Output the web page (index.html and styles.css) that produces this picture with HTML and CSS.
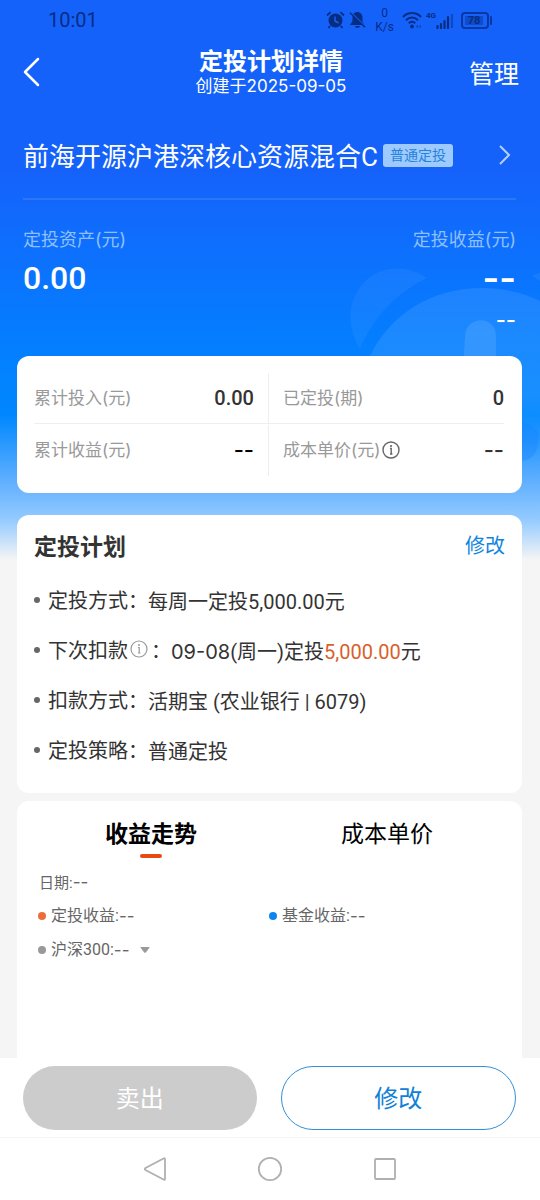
FILE: index.html
```html
<!DOCTYPE html>
<html lang="zh-CN">
<head>
<meta charset="utf-8">
<meta name="viewport" content="width=device-width, initial-scale=1">
<title>定投计划详情</title>
<link rel="stylesheet" href="styles.css">
</head>
<body>
<div class="app">
  <svg class="mascot" width="190" height="210" viewBox="350 260 190 210" aria-hidden="true">
    <defs>
      <linearGradient id="face" x1="0" y1="0" x2="0" y2="1">
        <stop offset="0" stop-color="#fff" stop-opacity=".09"/>
        <stop offset=".7" stop-color="#fff" stop-opacity=".09"/>
        <stop offset="1" stop-color="#fff" stop-opacity="0"/>
      </linearGradient>
    </defs>
    <path d="M427 278C409 266 385 265 369 278C346 297 346 327 360 349C373 317 396 293 427 278Z" fill="#fff" fill-opacity=".05"/>
    <path d="M532 276Q537 273 540 273V281Z" fill="#fff" fill-opacity=".06"/>
    <path d="M370 356C390 314 432 288 482 288C504 288 524 293 540 301V440H370Z" fill="url(#face)"/>
    <path d="M463 370L465 336C466 315 496 315 496 336V370Z" fill="#fff" fill-opacity=".11"/>
    <path d="M500 422Q528 418 538 432C540 450 534 462 518 461Z" fill="#1580ff" fill-opacity=".35"/>
  </svg>

  <div class="status">
    <span class="clock">10:01</span>
    <div class="status-icons">
      <svg width="19" height="18" viewBox="0 0 19 18" aria-hidden="true">
        <circle cx="9.500" cy="9.500" r="7" fill="#072d83"/>
        <path d="M1 4.500L4.500 1.200M18 4.500L14.500 1.200M4 15l-1.500 2M15 15l1.500 2" stroke="#072d83" stroke-width="1.800" fill="none"/>
        <path d="M9 5.500V10l3.500 2" stroke="#1562fa" stroke-width="1.500" fill="none"/>
      </svg>
      <svg class="bell" width="17" height="18" viewBox="0 0 17 18" aria-hidden="true">
        <path d="M8 1C4.500 1.500 3.500 4 3.500 7v3L1 14h14.500L13.500 10.500V7C13.500 4 12 1.500 9 1ZM6 15h5c-.5 2.500-4.500 2.500-5 0Z" fill="#072d83"/>
        <path d="M2 1.500L17 16" stroke="#1562fa" stroke-width="1.500"/>
        <path d="M1 1.800L16 16.300" stroke="#072d83" stroke-width="1.500"/>
      </svg>
      <span class="speed"><span>0</span><span>K/s</span></span>
      <svg class="wifi" width="20" height="18" viewBox="0 0 20 18" aria-hidden="true">
        <path d="M1 6C6 .8 14 .8 19 6M4 9.200c3.500-3.500 8.500-3.500 12 0M6.800 12.300c2-2 4.400-2 6.400 0" stroke="#072d83" stroke-width="2" fill="none"/>
        <circle cx="10" cy="15.500" r="1.900" fill="#072d83"/>
        <path d="M14 15.500l2-2v4zM19.500 15.500l-2-2v4z" fill="#0c43b8"/>
      </svg>
      <span class="net">4G</span>
      <svg width="18" height="17" viewBox="0 0 18 17" aria-hidden="true">
        <path d="M1.500 16v-2M5 16v-4M8.500 16V9M12 16V5" stroke="#072d83" stroke-width="2.200" stroke-linecap="round"/>
        <path d="M16 16V2" stroke="#0d49c4" stroke-width="2.200"/>
      </svg>
      <span class="battery"><span class="level">78</span></span>
    </div>
  </div>

  <header class="top">
    <button class="back" aria-label="返回">
      <svg width="18" height="30" viewBox="0 0 18 30" aria-hidden="true"><path d="M15 2L2 15L15 28" fill="none" stroke="#fff" stroke-width="2.500" stroke-linecap="round" stroke-linejoin="round"/></svg>
    </button>
    <div class="heading">
      <h1>定投计划详情</h1>
      <p>创建于2025-09-05</p>
    </div>
    <button class="manage">管理</button>
  </header>

  <main class="content">
    <section class="hero">
      <a class="fund" href="#fund">
        <span class="fund-name">前海开源沪港深核心资源混合C</span>
        <span class="tag">普通定投</span>
        <svg width="12" height="20" viewBox="0 0 12 20" aria-hidden="true"><path d="M1 1L10 10L1 19" fill="none" stroke="#b5cffd" stroke-width="2"/></svg>
      </a>
      <div class="assets">
        <div>
          <p class="asset-label">定投资产(元)</p>
          <p class="asset-value">0.00</p>
        </div>
        <div class="right">
          <p class="asset-label">定投收益(元)</p>
          <p class="asset-value dash wide">--</p>
          <p class="asset-rate dash">--</p>
        </div>
      </div>
    </section>

    <section class="card summary">
      <div class="cell"><span class="name">累计投入(元)</span><b>0.00</b></div>
      <div class="cell"><span class="name">已定投(期)</span><b>0</b></div>
      <div class="cell"><span class="name">累计收益(元)</span><b class="dash black">--</b></div>
      <div class="cell"><span class="with-info"><span class="name">成本单价(元)</span><button class="info" aria-label="成本单价说明"><svg width="18" height="18" viewBox="0 0 18 18" aria-hidden="true"><circle cx="9" cy="9" r="8" fill="none" stroke="#666" stroke-width="1.400"/><path d="M8 7.500H9.200V13M8 13h2.400" fill="none" stroke="#666" stroke-width="1.400"/><circle cx="9" cy="5" r="1.100" fill="#666"/></svg></button></span><b class="dash">--</b></div>
    </section>

    <section class="card plan">
      <div class="plan-head"><h2>定投计划</h2><button class="edit">修改</button></div>
      <dl>
        <div class="item"><dt>定投方式：</dt><dd>每周一定投5,000.00元</dd></div>
        <div class="item"><dt>下次扣款<button class="info small" aria-label="下次扣款说明"><svg width="18" height="18" viewBox="0 0 18 18" aria-hidden="true"><circle cx="9" cy="9" r="8" fill="none" stroke="#999" stroke-width="1.200"/><path d="M8 7.500H9.200V13M8 13h2.400" fill="none" stroke="#999" stroke-width="1.200"/><circle cx="9" cy="5" r="1" fill="#999"/></svg></button>：</dt><dd><span class="dash">09-08</span>(周一)定投<em>5,000.00</em>元</dd></div>
        <div class="item"><dt>扣款方式：</dt><dd>活期宝 (农业银行 | 6079)</dd></div>
        <div class="item"><dt>定投策略：</dt><dd>普通定投</dd></div>
      </dl>
    </section>

    <section class="card chart">
      <div class="tabs" role="tablist">
        <button class="tab active" role="tab" aria-selected="true">收益走势</button>
        <button class="tab" role="tab" aria-selected="false">成本单价</button>
      </div>
      <p class="date">日期:<span class="dash">--</span></p>
      <div class="legend">
        <span class="key orange">定投收益:<span class="dash">--</span></span>
        <span class="key blue">基金收益:<span class="dash">--</span></span>
        <button class="key grey">沪深300:<span class="dash">--</span><svg class="caret" width="10" height="6" viewBox="0 0 10 6" aria-hidden="true"><path d="M1 0h8q1 0 .4.800L6 5.300q-1 1-2 0L.6.800Q0 0 1 0Z" fill="#999"/></svg></button>
      </div>
    </section>
  </main>

  <footer class="bottom">
    <div class="actions">
      <button class="action sell">卖出</button>
      <button class="action modify">修改</button>
    </div>
    <nav class="system">
      <button aria-label="返回上一页"><svg width="24" height="26" viewBox="0 0 24 26" aria-hidden="true"><path d="M20.500 2.500Q22 1.500 22 3.500V22.500Q22 24.500 20.500 23.500L2.500 14Q1 13 2.500 12Z" fill="none" stroke="#b0b0b0" stroke-width="1.800"/></svg></button>
      <button aria-label="主屏幕"><svg width="26" height="26" viewBox="0 0 26 26" aria-hidden="true"><circle cx="13" cy="13" r="11.200" fill="none" stroke="#b0b0b0" stroke-width="1.800"/></svg></button>
      <button aria-label="最近任务"><svg width="24" height="24" viewBox="0 0 24 24" aria-hidden="true"><rect x="2" y="2" width="20" height="20" rx="1" fill="none" stroke="#b0b0b0" stroke-width="1.800"/></svg></button>
    </nav>
  </footer>
</div>
</body>
</html>
```

FILE: styles.css
```css
* {
  box-sizing: border-box;
}

body,
h1,
h2,
p,
dl,
dd {
  margin: 0;
}

body {
  font-family: Roboto, "Noto Sans CJK SC", sans-serif;
  color: #333;
  background: #f5f5f5;
}

button {
  padding: 0;
  border: 0;
  background: none;
  font: inherit;
  color: inherit;
  cursor: pointer;
}

svg {
  display: block;
  flex: none;
}

.app {
  position: relative;
  display: flex;
  flex-direction: column;
  min-height: 100vh;
  background: linear-gradient(#1562fa 0, #1562fa 170px, #0c72fe 265px, #047eff 340px, #0087ff 415px, #65b2ff 485px, #94cbff 520px, #f5f5f5 560px);
}

.mascot {
  position: absolute;
  top: 260px;
  right: 0;
}

.dash {
  font-family: Inter, sans-serif;
}

/* Status bar */
.status {
  display: flex;
  justify-content: space-between;
  align-items: center;
  height: 40px;
  padding: 0 48px;
  color: #072d83;
}

.clock {
  font-size: 20px;
}

.status-icons {
  display: flex;
  align-items: center;
}

.bell {
  margin-left: 4px;
}

.speed {
  display: flex;
  flex-direction: column;
  align-items: center;
  margin: 0 8px 0 9px;
  font-size: 12px;
  line-height: 14px;
}

.net {
  align-self: flex-start;
  margin-left: 4px;
  padding-top: 5px;
  font-size: 8px;
  font-weight: 700;
  line-height: 10px;
}

.battery {
  position: relative;
  width: 28px;
  height: 17px;
  margin: 0 3px 0 7px;
  padding: 2px;
  border: 2px solid #0a37a0;
  border-radius: 4px;
}

.battery::after {
  content: "";
  position: absolute;
  top: 2px;
  right: -5px;
  width: 2px;
  height: 9px;
  border-radius: 1px;
  background: #0a37a0;
}

.level {
  display: block;
  width: 18px;
  background: #0e4cc9;
  font-size: 11px;
  font-weight: 700;
  line-height: 9px;
  text-align: center;
}

/* Title bar */
.top {
  display: grid;
  grid-template-columns: 1fr auto 1fr;
  align-items: center;
  height: 64px;
  padding: 0 21px 0 23px;
  color: #fff;
}

.back {
  justify-self: start;
}

.heading {
  text-align: center;
}

.heading h1 {
  font-size: 24px;
  line-height: 28px;
}

.heading p {
  font-family: Inter, "Noto Sans CJK SC", sans-serif;
  font-size: 17px;
  line-height: 20px;
}

.manage {
  justify-self: end;
  font-size: 25px;
}

.content {
  position: relative;
  display: flex;
  flex: 1;
  flex-direction: column;
  padding: 0 18px 0 17px;
}

/* Fund and assets */
.hero {
  height: 252px;
  padding: 0 6px;
  color: #fff;
}

.fund {
  display: flex;
  align-items: center;
  height: 96px;
  padding: 8px 5px 0 0;
  border-bottom: 2px solid #2d75fb;
  color: inherit;
  text-decoration: none;
}

.fund-name {
  padding-bottom: 2px;
  font-size: 26px;
}

.tag {
  margin: 0 auto 0 5px;
  padding: 0 7px;
  border-radius: 3px;
  background: #9fcaff;
  color: #2583dc;
  font-size: 14px;
  line-height: 23px;
}

.assets {
  display: flex;
  justify-content: space-between;
  padding-top: 26px;
}

.right {
  text-align: right;
}

.asset-label {
  font-family: Inter, "Noto Sans CJK SC", sans-serif;
  color: #8fc0fe;
  font-size: 18px;
  line-height: 28px;
}

.asset-value {
  font-size: 32px;
  font-weight: 500;
  line-height: 48px;
}

.wide {
  font-size: 36px;
  font-weight: 600;
}

.asset-rate {
  font-size: 22px;
  font-weight: 500;
  line-height: 36px;
}

.card {
  border-radius: 12px;
  background: #fff;
}

/* Summary figures */
.summary {
  display: grid;
  grid-template-columns: 1fr 1fr;
  padding: 17px 18px 17px 17px;
  min-height: 137px;
  margin-bottom: 22px;
}

.cell {
  display: flex;
  justify-content: space-between;
  align-items: center;
  height: 51px;
  color: #999;
  font-size: 17px;
}

.cell:nth-child(odd) {
  padding-right: 14px;
  border-right: 1px solid #eee;
}

.cell:nth-child(even) {
  padding-left: 14px;
}

.cell:nth-child(-n + 2) {
  border-bottom: 1px solid #eee;
}

.cell b {
  color: #333;
  font-size: 20px;
  font-weight: 500;
}

.cell .dash {
  font-size: 22px;
}

.cell .black {
  color: #000;
}

.name {
  padding-bottom: 4px;
  font-family: Inter, "Noto Sans CJK SC", sans-serif;
}

.with-info {
  display: flex;
  align-items: center;
}

.info {
  margin-left: 2px;
}

/* Plan details */
.plan {
  padding: 0 17px 18px;
  margin-bottom: 8px;
}

.plan-head {
  display: flex;
  justify-content: space-between;
  align-items: center;
  height: 60px;
}

.plan-head h2 {
  font-size: 23px;
}

.edit {
  padding-bottom: 2px;
  color: #1085de;
  font-size: 20px;
}

.item {
  display: flex;
  align-items: center;
  height: 50px;
  font-size: 20px;
}

.item::before {
  content: "";
  width: 6px;
  height: 6px;
  margin-right: 8px;
  border-radius: 50%;
  background: #666;
}

.item dt {
  display: flex;
  align-items: center;
  padding-bottom: 2px;
}

.item dd {
  padding-top: 1px;
}

.item em {
  color: #d95f2b;
  font-style: normal;
}

.small {
  margin-right: 3px;
}

/* Trend chart */
.chart {
  flex: 1;
  padding: 0 17px 0 16px;
  border-radius: 12px 12px 0 0;
  color: #666;
}

.tabs {
  display: flex;
}

.tab {
  flex: 1;
  padding-top: 8px;
  color: #000;
  font-size: 23px;
  line-height: 51px;
}

.active {
  font-weight: 700;
}

.tab::after {
  content: "";
  display: block;
  width: 22px;
  height: 4px;
  margin: -6px auto 0;
  border-radius: 2px;
}

.active::after {
  background: #e84a14;
}

.date {
  padding: 11px 6px 0;
  font-size: 15px;
  line-height: 26px;
}

.date .dash,
.key .dash {
  font-size: 17px;
}

.legend {
  display: grid;
  grid-template-columns: 1fr 1fr;
  padding: 3px 5px 0;
}

.key {
  display: flex;
  align-items: center;
  font-size: 16px;
  line-height: 34px;
}

.key::before {
  content: "";
  width: 8px;
  height: 8px;
  margin-right: 5px;
  border-radius: 50%;
}

.orange::before {
  background: #ec6c3c;
}

.blue::before {
  background: #0c86ee;
}

.grey::before {
  background: #999;
}

.caret {
  margin-left: 10px;
}

/* Actions and system navigation */
.bottom {
  position: sticky;
  bottom: 0;
  background: #fff;
}

.actions {
  display: flex;
  gap: 24px;
  padding: 8px 24px 7px 23px;
}

.action {
  flex: 1;
  height: 64px;
  padding-bottom: 4px;
  border-radius: 32px;
  font-size: 24px;
}

.sell {
  background: #ccc;
  color: #fff;
}

.modify {
  border: 1px solid #3090dc;
  color: #1080d8;
}

.system {
  display: flex;
  justify-content: center;
  align-items: center;
  gap: 90px;
  height: 63px;
  border-top: 1px solid #f5f5f5;
}
```
